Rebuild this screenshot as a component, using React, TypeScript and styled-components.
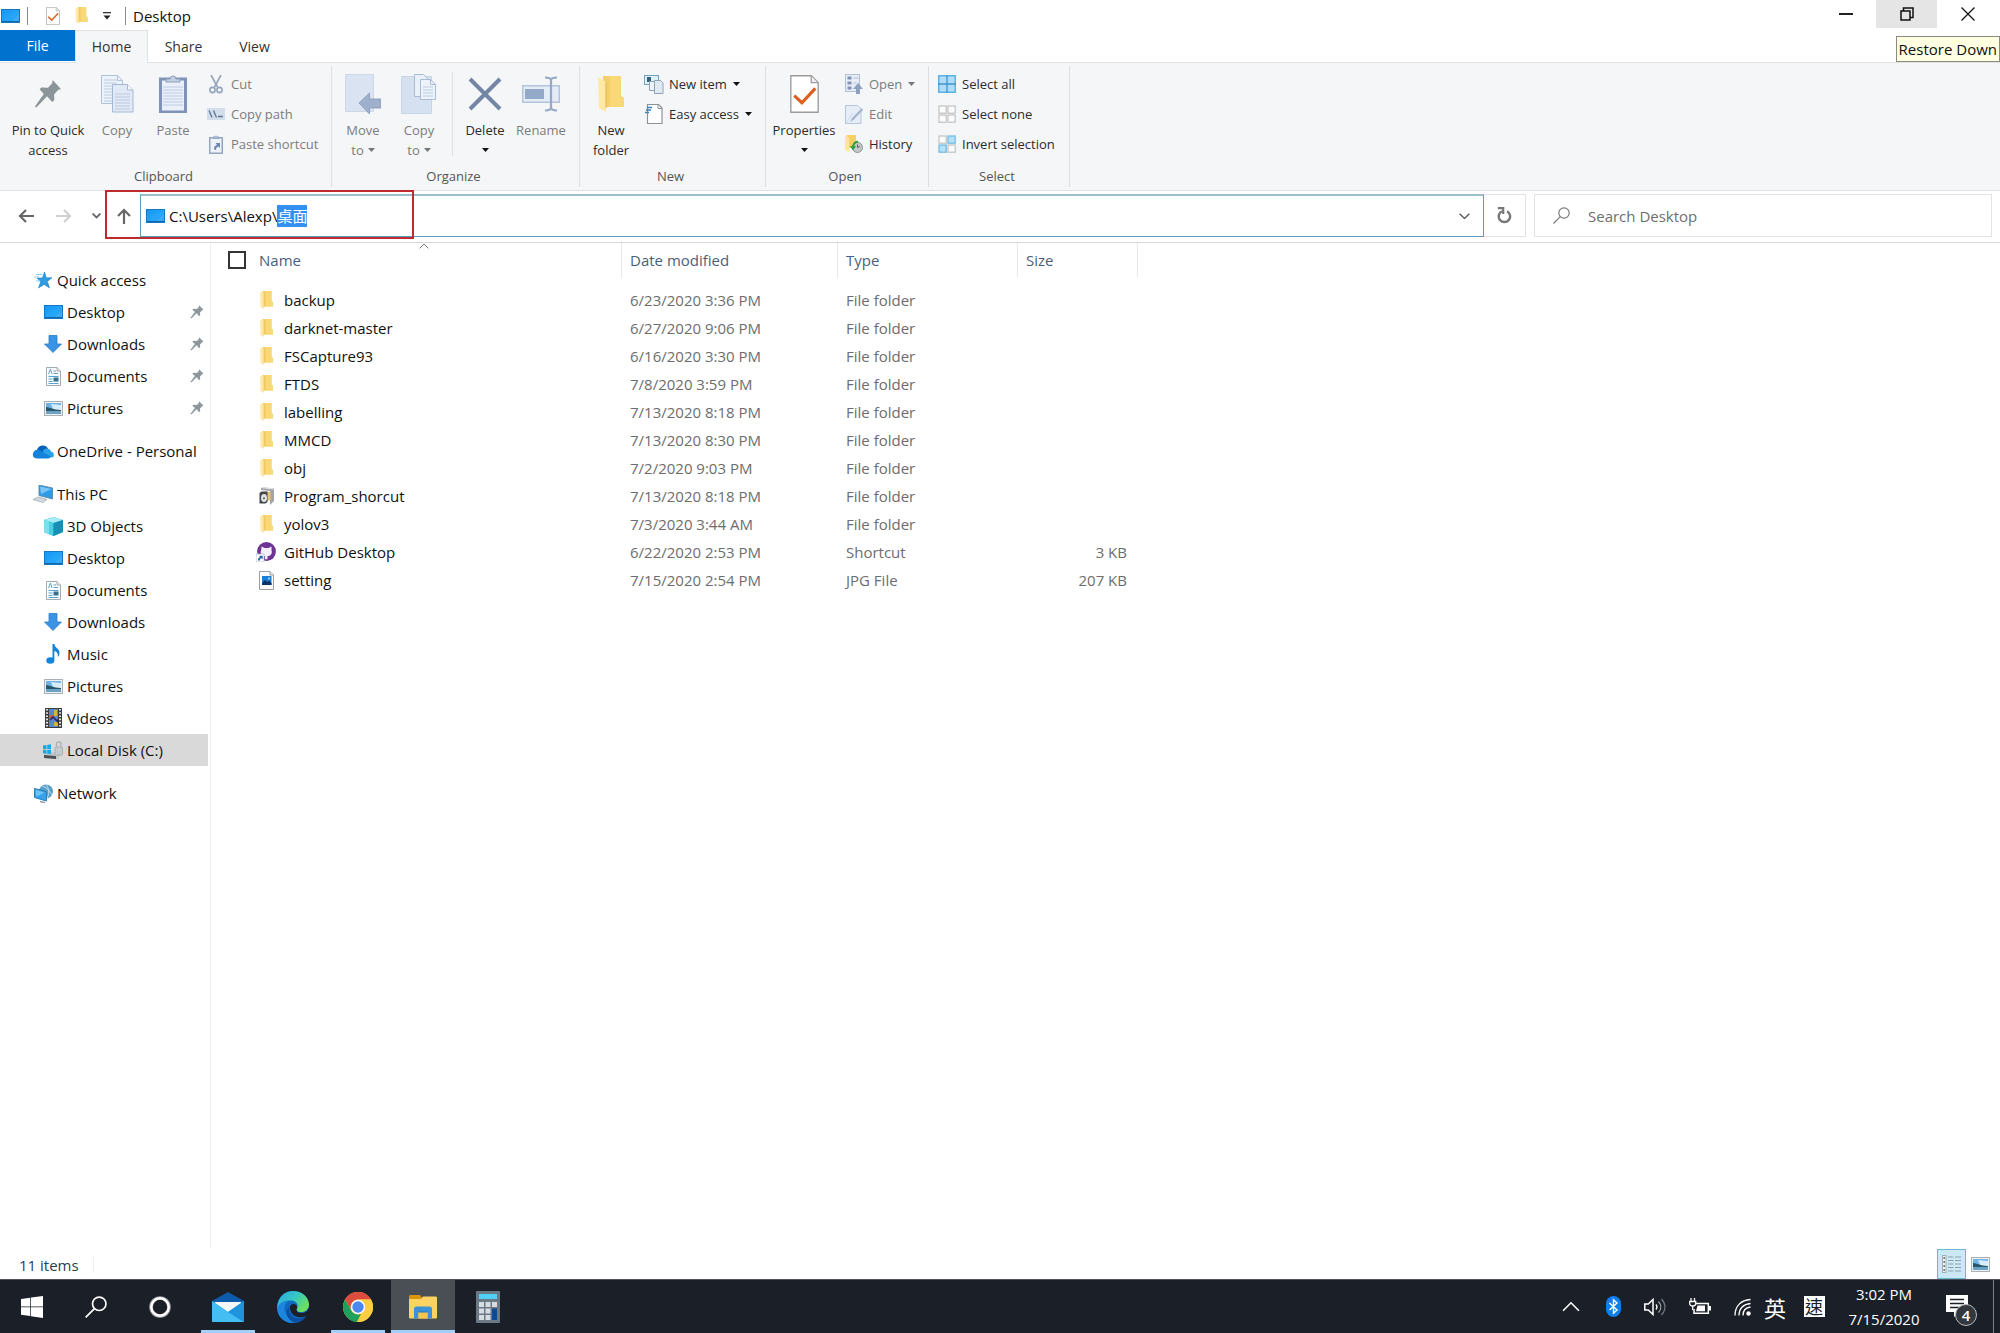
import React, { useEffect, useId, useRef } from "react";
import styled, { createGlobalStyle, css } from "styled-components";

const Global = createGlobalStyle`
  *, *::before, *::after { box-sizing: border-box; }
  body { margin: 0; background: #fff; }
  body, button, input { font-family: "Open Sans", "Noto Sans", "Noto Sans CJK TC", sans-serif; }
  button { border: 0; padding: 0; margin: 0; background: transparent; color: inherit; font-size: inherit; line-height: inherit; cursor: default; }
  svg { display: block; flex: none; }
`;

/* ---------- page ---------- */

const Page = styled.div`
  display: flex;
  flex-direction: column;
  min-height: 100vh;
  background: #fff;
  color: #111;
  font-size: 15px;
  line-height: 22px;
  overflow: hidden;
`;

const TitleBar = styled.header`
  position: relative;
  display: flex;
  align-items: flex-start;
  justify-content: space-between;
  height: 30px;
`;

const QuickTools = styled.div`
  display: flex;
  align-items: center;
  height: 31px;
`;

const ToolButton = styled.button<{ $w: number }>`
  display: flex;
  justify-content: center;
  width: ${(p) => p.$w}px;
`;

const ToolRule = styled.span`
  width: 1px;
  height: 18px;
  background: #8a8a8a;
`;

const WindowTitle = styled.h1`
  margin: 0 0 0 4px;
  font-size: 15px;
  font-weight: 400;
  line-height: 22px;
`;

const WindowButtons = styled.div`
  display: flex;
  padding-right: 2px;
`;

const WindowButton = styled.button<{ $hover?: boolean }>`
  display: flex;
  align-items: center;
  justify-content: center;
  width: 61px;
  height: 28px;
  background: ${(p) => (p.$hover ? "#e5e5e5" : "transparent")};
`;

const Tooltip = styled.div`
  position: absolute;
  top: 36px;
  right: 0;
  z-index: 3;
  padding: 1px 2px 0;
  border: 1px solid #8b8b80;
  background: #ffffe1;
  font-size: 15px;
  line-height: 23px;
  white-space: nowrap;
`;

/* ---------- ribbon ---------- */

const Tabs = styled.div`
  position: relative;
  z-index: 1;
  display: flex;
  height: 32px;
`;

const tab = css`
  height: 31px;
  font-size: 14px;
  text-align: center;
`;

const FileTab = styled.button`
  ${tab}
  width: 75px;
  background: #0173cf;
  color: #fff;
`;

const Tab = styled.button<{ $active?: boolean }>`
  ${tab}
  width: ${(p) => (p.$active ? 73 : 71)}px;
  height: 33px;
  color: #333;
  ${(p) =>
    p.$active &&
    css`
      border: 1px solid #dfe1e3;
      border-bottom: 0;
      background: #f5f6f7;
    `}
`;

const Ribbon = styled.section`
  display: flex;
  height: 129px;
  padding: 3px 0;
  border-top: 1px solid #dfe1e3;
  border-bottom: 1px solid #dfe1e3;
  background: #f5f6f7;
`;

const Group = styled.section<{ $w: number }>`
  display: flex;
  flex-direction: column;
  flex: none;
  width: ${(p) => p.$w}px;
  border-right: 1px solid #dcdee0;
`;

const GroupTools = styled.div<{ $start?: number }>`
  display: flex;
  flex: 1;
  padding-left: ${(p) => p.$start ?? 3}px;
`;

const GroupName = styled.h2`
  margin: 0;
  padding: 0 4px 2px 0;
  color: #555;
  font-size: 13px;
  font-weight: 400;
  line-height: 18px;
  text-align: center;
`;

const BigButton = styled.button<{ $w?: number; $off?: boolean }>`
  display: flex;
  flex-direction: column;
  align-items: center;
  width: ${(p) => p.$w ?? 56}px;
  padding-top: 8px;
  color: ${(p) => (p.$off ? "#7c7c7c" : "#2b2b2b")};
  font-size: 13px;
  line-height: 20px;
  white-space: nowrap;
`;

const BigIcon = styled.span`
  display: flex;
  align-items: center;
  justify-content: center;
  height: 40px;
  margin-bottom: 6px;
`;

const LabelLine = styled.span`
  display: flex;
  align-items: center;
  gap: 4px;
  height: 20px;
`;

const Divider = styled.span`
  width: 1px;
  height: 84px;
  margin: 6px 4px 0 5px;
  background: #dcdee0;
`;

const SmallColumn = styled.div`
  display: flex;
  flex-direction: column;
  padding: 3px 0 0 6px;
`;

const SmallButton = styled.button<{ $off?: boolean }>`
  display: flex;
  align-items: center;
  gap: 6px;
  height: 30px;
  flex: none;
  color: ${(p) => (p.$off ? "#7c7c7c" : "#2b2b2b")};
  font-size: 13px;
  white-space: nowrap;
`;

const IconBox = styled.span<{ $w: number }>`
  display: flex;
  flex: none;
  align-items: center;
  justify-content: center;
  width: ${(p) => p.$w}px;
`;

/* ---------- address row ---------- */

const AddressRow = styled.div`
  position: relative;
  display: flex;
  align-items: flex-start;
  height: 52px;
  padding: 3px 8px 0 8px;
  border-bottom: 1px solid #d5d7d9;
`;

const NavButton = styled.button<{ $w: number }>`
  display: flex;
  align-items: center;
  justify-content: center;
  width: ${(p) => p.$w}px;
  height: 44px;
`;

const AddressBox = styled.div`
  display: flex;
  flex: 1;
  align-items: center;
  gap: 4px;
  height: 43px;
  padding: 0 13px 0 5px;
  border: 1px solid #5f9cba;
  border-top: 2px solid #9dbdd0;
`;

const AddressInput = styled.input`
  flex: 1;
  min-width: 0;
  height: 22px;
  padding: 0;
  border: 0;
  outline: 0;
  background: transparent;
  color: #111;
  font-size: 15px;
  line-height: 22px;
  &::selection { background: #3390f0; color: #fff; }
`;

const RefreshButton = styled.button`
  display: flex;
  align-items: center;
  justify-content: center;
  width: 42px;
  height: 43px;
  border: 1px solid #e3e3e3;
  border-left: 0;
`;

const SearchBox = styled.div`
  display: flex;
  align-items: center;
  gap: 18px;
  flex: 0 1 458px;
  height: 43px;
  margin-left: 8px;
  padding-left: 18px;
  border: 1px solid #e3e3e3;
`;

const SearchInput = styled.input`
  flex: 1;
  min-width: 0;
  height: 24px;
  padding: 0;
  border: 0;
  outline: 0;
  font-size: 15px;
  &::placeholder { color: #6f6f6f; opacity: 1; }
`;

const HighlightFrame = styled.div`
  position: absolute;
  top: -1px;
  left: 105px;
  width: 309px;
  height: 49px;
  border: 2px solid #bf2a30;
  pointer-events: none;
`;

/* ---------- body ---------- */

const Body = styled.div`
  display: flex;
  flex: 1;
`;

const Sidebar = styled.nav`
  display: flex;
  flex: none;
  flex-direction: column;
  gap: 11px;
  width: 211px;
  padding: 21px 2px 0 0;
  border-right: 1px solid #f0f0f0;
`;

const TreeList = styled.ul`
  margin: 0;
  padding: 0;
  list-style: none;
`;

const TreeItem = styled.button<{ $level: number; $selected?: boolean }>`
  display: flex;
  align-items: center;
  gap: 3px;
  width: 100%;
  height: 32px;
  padding: 0 4px 0 ${(p) => (p.$level ? 42 : 32)}px;
  background: ${(p) => (p.$selected ? "#d9d9d9" : "transparent")};
  text-align: left;
  white-space: nowrap;
`;

const TreeName = styled.span`
  flex: 1;
`;

const Files = styled.main`
  flex: 1;
  min-width: 0;
  padding-left: 17px;
`;

const Table = styled.table`
  width: 910px;
  border-collapse: separate;
  border-spacing: 0;
  table-layout: fixed;
`;

const Col = styled.col<{ $w: number }>`
  width: ${(p) => p.$w}px;
`;

const Th = styled.th`
  position: relative;
  height: 34px;
  padding: 0 8px;
  border-right: 1px solid #e8e8e8;
  color: #4c5f7a;
  font-weight: 400;
  text-align: left;
  &:first-child { padding-left: 0; }
`;

const HeadCell = styled.div`
  display: flex;
  align-items: center;
  gap: 13px;
`;

const SortMark = styled.span`
  position: absolute;
  top: 0;
  left: 191px;
`;

const CheckAll = styled.input`
  appearance: none;
  width: 18px;
  height: 18px;
  margin: 0;
  border: 2px solid #333;
  background: #fff;
`;

const Rows = styled.tbody`
  &::before { content: ""; display: table-row; height: 9px; }
`;

const Td = styled.td<{ $right?: boolean }>`
  height: 28px;
  padding: 0 11px 0 8px;
  color: #6d6d6d;
  text-align: ${(p) => (p.$right ? "right" : "left")};
  white-space: nowrap;
`;

const NameTd = styled(Td)`
  padding-left: 28px;
  color: #111;
`;

const FileName = styled.div`
  display: flex;
  align-items: center;
  gap: 8px;
`;

const StatusBar = styled.footer`
  display: flex;
  align-items: flex-end;
  justify-content: space-between;
  height: 31px;
  color: #2a3d5c;
`;

const ItemCount = styled.span`
  margin-bottom: 6px;
  padding: 0 14px 0 19px;
  border-right: 1px solid #efefef;
  line-height: 16px;
`;

const ViewButtons = styled.div`
  display: flex;
  padding-right: 5px;
`;

const ViewButton = styled.button<{ $active?: boolean }>`
  display: flex;
  align-items: center;
  justify-content: center;
  width: 29px;
  height: 30px;
  border: 1px solid ${(p) => (p.$active ? "#69b9d0" : "transparent")};
  background: ${(p) => (p.$active ? "#cbe8f4" : "transparent")};
`;

/* ---------- task bar ---------- */

const TaskBar = styled.footer`
  display: flex;
  justify-content: space-between;
  height: 54px;
  border-top: 1px solid #4d5158;
  background: #1a1f28;
  color: #fff;
`;

const TaskApps = styled.div`
  display: flex;
`;

const Pinned = styled.div`
  display: flex;
  gap: 1px;
  margin-left: 4px;
`;

const TaskButton = styled.button<{ $active?: boolean }>`
  position: relative;
  display: flex;
  align-items: center;
  justify-content: center;
  width: 64px;
  height: 53px;
  background: ${(p) => (p.$active ? "#4a4e55" : "transparent")};
`;

const Running = styled.span<{ $full?: boolean }>`
  position: absolute;
  bottom: 0;
  left: ${(p) => (p.$full ? 0 : 5)}px;
  right: ${(p) => (p.$full ? 0 : 5)}px;
  height: 3px;
  background: #a3cef8;
`;

const Tray = styled.div`
  display: flex;
  align-items: center;
`;

const TrayButton = styled.button<{ $w: number }>`
  display: flex;
  align-items: center;
  justify-content: center;
  width: ${(p) => p.$w}px;
  height: 53px;
`;

const InputLanguage = styled.span`
  font-family: "Noto Sans CJK TC", sans-serif;
  font-size: 22px;
  line-height: 30px;
`;

const InputMode = styled.span`
  width: 21px;
  height: 21px;
  background: #fff;
  color: #1a1f28;
  font-family: "Noto Sans CJK TC", sans-serif;
  font-size: 18px;
  line-height: 20px;
  text-align: center;
`;

const Clock = styled.time`
  display: flex;
  flex-direction: column;
  align-items: center;
  width: 92px;
  margin-right: 3px;
  font-size: 15px;
  line-height: 25px;
`;

const Notices = styled.button`
  position: relative;
  display: flex;
  justify-content: center;
  width: 60px;
  height: 53px;
  padding: 15px 12px 0 0;
`;

const Badge = styled.span`
  position: absolute;
  top: 24px;
  left: 22px;
  width: 22px;
  height: 22px;
  border: 1px solid #b9bbbe;
  border-radius: 50%;
  background: #33373e;
  font-size: 15px;
  font-weight: 600;
  line-height: 20px;
  text-align: center;
`;

const ShowDesktop = styled.button`
  width: 7px;
  height: 53px;
  border-left: 1px solid #7d8085;
`;

/* ---------- icons ---------- */

const DesktopIcon = ({ w = 19, h = 14 }: { w?: number; h?: number }) => {
  const id = useId();
  return (
    <svg width={w} height={h} viewBox="0 0 19 14">
      <defs>
        <linearGradient id={id} x1="0" y1="0" x2="1" y2="1">
          <stop offset="0" stopColor="#1296f3" />
          <stop offset=".6" stopColor="#27a6fb" />
          <stop offset="1" stopColor="#1488e4" />
        </linearGradient>
      </defs>
      <rect x=".5" y=".5" width="18" height="13" fill={`url(#${id})`} stroke="#1478c4" />
      <path d="M18 5L9 13h9z" fill="#56bcff" opacity=".5" />
      <path d="M1 12.5h17" stroke="#0c67ad" strokeWidth="1" />
    </svg>
  );
};

const FolderIcon = ({ w = 13, h = 18 }: { w?: number; h?: number }) => (
  <svg width={w} height={h} viewBox="0 0 26 36">
    <path d="M5 0h18v20l3 2v9H6z" fill="#f5cf6b" />
    <path d="M12 0h11v20l3 2v9H12z" fill="#f9d878" />
    <path d="M0 1l8 5v30L1 32z" fill="#ffe9a6" />
    <path d="M8 6v26" stroke="#e8bb52" strokeWidth="1.2" />
  </svg>
);

const CheckPage = ({ w = 14, h = 18, tick = 3 }: { w?: number; h?: number; tick?: number }) => (
  <svg width={w} height={h} viewBox="0 0 28 37">
    <path d="M.7.7h20l6.600 6.600v29H.7z" fill="#fff" stroke="#9a9a9a" strokeWidth="1.300" />
    <path d="M20.500 1v6.500H27" fill="#eee" stroke="#9a9a9a" strokeWidth="1.200" />
    <path d="M4 20l7.500 7L24.500 13" fill="none" stroke="#dc5f1f" strokeWidth={tick} />
  </svg>
);

const Caret = ({ color = "#111" }: { color?: string }) => (
  <svg width="7" height="4" viewBox="0 0 7 4">
    <path d="M0 0h7L3.500 4z" fill={color} />
  </svg>
);

const BigPin = () => (
  <svg width="28" height="28" viewBox="0 0 28 30">
    <path d="M19 0l9 10-3 .5-4.500 5 .3 6-2.300 2L13 17.500 1.500 29.500 0 28.500 9.500 15 5 10l2-2 7 .4 4.500-5z" fill="#8a9499" />
  </svg>
);

const SmallPin = () => (
  <svg width="14" height="14" viewBox="0 0 28 30">
    <path d="M18 0l10 10-3 1-4.500 5 .3 6-2.300 2L13 17.500 2 29 0 27.500 9.500 15 4 10l2-2 8 .4L18.500 3z" fill="#8e989e" />
  </svg>
);

const Lines = ({ x, y, w, n, step = 3 }: { x: number; y: number; w: number; n: number; step?: number }) => (
  <path
    d={Array.from({ length: n }, (_, i) => `M${x} ${y + i * step}h${w}`).join("")}
    stroke="#bccbe0"
    strokeWidth="1"
  />
);

const CopyIcon = () => (
  <svg width="33" height="38" viewBox="0 0 33 38">
    <path d="M.5.500h16l5 5v23H.5z" fill="#edf3fa" stroke="#b0c2da" />
    <path d="M16.500.500v5h5" fill="none" stroke="#b0c2da" />
    <Lines x={3} y={5} w={13} n={8} />
    <path d="M11.500 9.500h15l5.500 5.500v22H11.500z" fill="#e0e9f5" stroke="#a5b9d5" />
    <path d="M26.500 9.500V15H32" fill="#f5f8fc" stroke="#a5b9d5" />
    <Lines x={14} y={19} w={15} n={6} />
  </svg>
);

const PasteIcon = () => (
  <svg width="28" height="38" viewBox="0 0 28 38">
    <rect x="1.500" y="4" width="25" height="33" fill="#e9f0fa" stroke="#7f93b8" strokeWidth="3" />
    <Lines x={4} y={12} w={20} n={7} />
    <path d="M7 7V4h4a3 3 0 016 0h4v3z" fill="#c4d0e2" stroke="#8d9dba" />
  </svg>
);

const CutIcon = () => (
  <svg width="14" height="19" viewBox="0 0 14 19">
    <path d="M2 0l6.500 12M12 0L5.500 12" stroke="#94a4bd" strokeWidth="1.600" fill="none" />
    <circle cx="3.500" cy="15" r="2.600" fill="none" stroke="#94a4bd" strokeWidth="1.600" />
    <circle cx="10.500" cy="15" r="2.600" fill="none" stroke="#94a4bd" strokeWidth="1.600" />
  </svg>
);

const CopyPathIcon = () => (
  <svg width="18" height="12" viewBox="0 0 18 12">
    <rect width="18" height="12" fill="#d3deec" />
    <path d="M2 2.500l3 7M6.500 2.500l3 7M11 8.500h5" stroke="#62748f" strokeWidth="1.300" />
  </svg>
);

const PasteShortcutIcon = () => (
  <svg width="14" height="19" viewBox="0 0 14 19">
    <rect x=".75" y="2.750" width="12.500" height="15.500" fill="#eef3fa" stroke="#93a5c2" strokeWidth="1.500" />
    <path d="M4 3.500V2h2a1 1 0 012 0h2v1.500z" fill="#b8c5d8" stroke="#93a5c2" />
    <path d="M5 14.500c0-3 1-4 3-4.500L6.500 8H11v5L9.500 11.500C7.500 12 7 13 7 15z" fill="#6f86ae" />
  </svg>
);

const MoveIcon = () => (
  <svg width="36" height="40" viewBox="0 0 36 40">
    <path d="M.5.500h28v37H.5z" fill="#d9e3f1" stroke="#ccd8e9" />
    <path d="M14 29L24.500 19v6H36v9H24.500v6z" fill="#9fb0cc" stroke="#8798b8" strokeWidth=".8" />
  </svg>
);

const CopyToIcon = () => (
  <svg width="36" height="40" viewBox="0 0 36 40">
    <path d="M.5 2.500h30v37H.5z" fill="#d5e0f0" stroke="#c8d5e8" />
    <path d="M13.500.500h9l4 4v18h-13z" fill="#e9f0f8" stroke="#a9bbd5" />
    <path d="M19.500 5.500h10l5 5v15h-15z" fill="#edf3fa" stroke="#a9bbd5" />
    <path d="M29.500 5.500v5h5" fill="none" stroke="#a9bbd5" />
    <Lines x={22} y={13} w={10} n={4} />
  </svg>
);

const DeleteIcon = () => (
  <svg width="34" height="34" viewBox="0 0 34 34">
    <path d="M2 2l30 30M32 2L2 32" stroke="#7386a5" strokeWidth="4" />
  </svg>
);

const RenameIcon = () => (
  <svg width="38" height="36" viewBox="0 0 38 36">
    <rect x=".75" y="9.750" width="36.500" height="16.500" fill="#e3ecf7" stroke="#b3c4dc" strokeWidth="1.500" />
    <rect x="3" y="13" width="19" height="10" fill="#94a8c8" />
    <path d="M23 1.500c4 0 6 1 6 3v27c0 2-2 3-6 3M35 1.500c-4 0-6 1-6 3v27c0 2 2 3 6 3" fill="none" stroke="#94a8c8" strokeWidth="2.200" />
  </svg>
);

const NewItemIcon = () => (
  <svg width="20" height="19" viewBox="0 0 20 19">
    <rect x=".5" y=".5" width="14" height="9" fill="#dff0f8" stroke="#6fa5bf" />
    <path d="M3 2h4v5H3z" fill="#35607a" />
    <path d="M5.500 6.500h6v9h-6z" fill="#eef3f8" stroke="#8fa2b5" />
    <path d="M10.500 5.500h6l2.500 2.500v10.500h-8.500z" fill="#e1e9f3" stroke="#8fa2b5" />
  </svg>
);

const EasyAccessIcon = () => (
  <svg width="18" height="20" viewBox="0 0 18 20">
    <path d="M2.500.500h11l3.500 3.500v15.500H2.500z" fill="#fff" stroke="#8d9499" strokeWidth="1.200" />
    <path d="M13 1v3.500h4" fill="none" stroke="#8d9499" />
    <path d="M2 3.500h5M1 6h5M0 8.500h4" stroke="#3c82b8" strokeWidth="1.700" />
  </svg>
);

const OpenIcon = () => (
  <svg width="18" height="20" viewBox="0 0 18 20">
    <rect x=".5" y=".5" width="14" height="17" fill="#e6edf6" stroke="#b3c0d4" />
    <path d="M2.500 2.500h4v3h-4zM2.500 7.500h4v3h-4zM2.500 12.500h4v3h-4z" fill="#8093b5" />
    <path d="M8.500 4h5M8.500 9h3" stroke="#b3c0d4" />
    <path d="M13 9l5 6h-3v5h-4v-5H8z" fill="#8fa0bf" />
  </svg>
);

const EditIcon = () => (
  <svg width="18" height="19" viewBox="0 0 18 19">
    <path d="M.5.500h12l3.500 3.500v14.500H.5z" fill="#e6edf7" stroke="#b6c6dc" />
    <path d="M17 3L7 13l-2 4 4-2.500L18 5z" fill="#a5b6cf" />
    <path d="M1 18L8 8" stroke="#cddaea" />
  </svg>
);

const HistoryIcon = () => (
  <svg width="18" height="18" viewBox="0 0 18 18">
    <path d="M2 0h9v13H2z" fill="#f6cf66" />
    <path d="M0 0l4 3v14l-4-2z" fill="#ffe69c" />
    <circle cx="12.500" cy="12.500" r="5" fill="#c3c8cb" stroke="#8b9195" />
    <path d="M12.500 9.500v3l2.500 -1" stroke="#5b6166" fill="none" />
    <path d="M8 12c.3-3 2-5 5-5.500" stroke="#2ca13a" strokeWidth="2" fill="none" />
    <path d="M5 11h6L8 15.500z" fill="#2ca13a" />
  </svg>
);

const SelectIcon = ({ fills }: { fills: [boolean, boolean, boolean, boolean] }) => (
  <svg width="18" height="18" viewBox="0 0 18 18">
    {fills.map((on, i) => (
      <rect
        key={i}
        x={(i % 2) * 9 + 1}
        y={Math.floor(i / 2) * 9 + 1}
        width="7.200"
        height="7.200"
        fill={on ? "#b5e0fa" : "#fbfbfb"}
        stroke={on ? "#6fb9e0" : "#c2c2c2"}
        strokeWidth="1.200"
      />
    ))}
  </svg>
);

const SelectAllIcon = () => (
  <svg width="18" height="18" viewBox="0 0 18 18">
    <rect x=".75" y=".75" width="16.500" height="16.500" fill="#aedcfa" stroke="#5fb2e4" strokeWidth="1.500" />
    <path d="M9 0v18M0 9h18" stroke="#3c97d0" strokeWidth="1.300" />
  </svg>
);

const Arrow = ({ dir, color }: { dir: "left" | "right" | "up"; color: string }) => {
  const d = {
    left: "M16 8H2M8 2L2 8l6 6",
    right: "M0 8h14M8 2l6 6-6 6",
    up: "M8 16V2M2 8l6-6 6 6",
  }[dir];
  return (
    <svg width="16" height="16" viewBox="0 0 16 16">
      <path d={d} fill="none" stroke={color} strokeWidth="2.200" />
    </svg>
  );
};

const Chevron = ({ w = 10, color = "#555", sw = 1.5, up = false }: { w?: number; color?: string; sw?: number; up?: boolean }) => (
  <svg width={w} height={w * 0.6} viewBox="0 0 10 6">
    <path d={up ? "M.6 5.400L5 1l4.400 4.400" : "M.6.600L5 5 9.400.600"} fill="none" stroke={color} strokeWidth={sw} />
  </svg>
);

const RefreshIcon = () => (
  <svg width="15" height="17" viewBox="0 0 15 17">
    <path d="M10 4.300A5.700 5.700 0 114.800 4.300" fill="none" stroke="#777" strokeWidth="2.400" />
    <path d="M.8 1.200h5.400v5.800" fill="none" stroke="#777" strokeWidth="2.200" />
  </svg>
);

const Magnifier = ({ s = 17, color = "#7a7a7a", sw = 1.2 }: { s?: number; color?: string; sw?: number }) => (
  <svg width={s} height={s} viewBox="0 0 17 17">
    <circle cx="11" cy="6" r="5.200" fill="none" stroke={color} strokeWidth={sw} />
    <path d="M7.300 9.700L.5 16.500" stroke={color} strokeWidth={sw} />
  </svg>
);

const StarIcon = () => (
  <svg width="18" height="17" viewBox="0 0 18 17">
    <path d="M10.500 0l1.800 5.800H18l-4.700 3.600L15.500 16l-5.300-3.600L4.500 16l2.200-6.200L3 6h5.300z" fill="#2f9ce2" stroke="#1c7fc4" strokeWidth=".6" />
    <path d="M2 2.500h6M0 5h5M2 9h4" stroke="#8ccbf2" strokeWidth="1.200" />
  </svg>
);

const DownloadIcon = () => (
  <svg width="18" height="18" viewBox="0 0 18 18">
    <path d="M5 .5h8V9h4.500L9 17.500.500 9H5z" fill="#3b93e3" stroke="#2b7cc9" strokeWidth=".8" />
  </svg>
);

const DocumentIcon = () => (
  <svg width="15" height="19" viewBox="0 0 15 19">
    <path d="M.5.500h10.500l3.500 3.500v14.500H.5z" fill="#fbfcfd" stroke="#a3abb0" />
    <path d="M11 .5V4h3.500" fill="#e2e6e9" stroke="#a3abb0" />
    <path d="M2.500 7L4.500 2l1.500 5M7.500 4H10M7.500 6.500h4.500M2.500 9.500h10M2.500 12h4M2.500 14.500h4M2.500 16.500h10" stroke="#5ba4cf" fill="none" />
    <rect x="7.500" y="10.500" width="5" height="4" fill="#35718f" />
  </svg>
);

const PictureIcon = () => (
  <svg width="19" height="15" viewBox="0 0 19 15">
    <rect x=".5" y=".5" width="18" height="14" fill="#eef1f4" stroke="#a9b0b7" />
    <path d="M2 2h15v6H2z" fill="#6fb4e8" />
    <path d="M7 3l10 1v4H9z" fill="#d5ecfa" />
    <path d="M2 6c4 0 7 3 15 3v1.500H2z" fill="#27576a" />
    <path d="M2 10h15v3H2z" fill="#6ba3c4" />
  </svg>
);

const CloudIcon = () => (
  <svg width="22" height="15" viewBox="0 0 22 15">
    <path d="M5 6a6 6 0 0111-1.500l-3 6-9 3a4.300 4.300 0 011-7.500z" fill="#0b63b8" />
    <path d="M11 6.500c3-3.500 7-2 8 1 3 .5 3.500 4 2 6L12 12z" fill="#2aa2ea" />
    <path d="M1 12C0 7 5 4 9 7l10 5.500c-.5 1.300-1.500 2-3 2H5c-2 0-3.500-1-4-2.500z" fill="#1583dc" />
  </svg>
);

const PcIcon = () => (
  <svg width="20" height="18" viewBox="0 0 20 18">
    <path d="M6 0l13.500 3v11L6 10.500z" fill="#2f9be6" stroke="#5f8fae" />
    <path d="M7 1.500l11.500 2.500L8 9z" fill="#79c5f7" />
    <path d="M5 12l9 2.500-4 3L0 14.500z" fill="#bcc5cb" stroke="#98a4ac" strokeWidth=".6" />
    <path d="M2.500 14l8 2.500M4 13l8 2.500" stroke="#eef1f3" strokeWidth=".7" />
  </svg>
);

const CubeIcon = () => (
  <svg width="19" height="19" viewBox="0 0 19 19">
    <path d="M9.500 0L19 3v12l-9.500 4L0 15V3z" fill="#25b4cf" />
    <path d="M9.500 0L19 3l-9.500 3L0 3z" fill="#a5ecf5" />
    <path d="M0 3l9.500 3v13L0 15z" fill="#48cfe0" />
    <path d="M0 3l5 1.500v12.300L0 15z" fill="#7fe0ec" />
    <path d="M9.500 6L19 3v12l-9.500 4z" fill="#168fb4" />
  </svg>
);

const MusicIcon = () => (
  <svg width="14" height="20" viewBox="0 0 14 20">
    <ellipse cx="4.300" cy="16.500" rx="4" ry="3.300" fill="#1385d8" />
    <path d="M6.500 0h2c0 4 5 4 5 9 0 2-1 3.500-1.500 4 0-4-1-5-3.700-6v9.500H6.500z" fill="#1385d8" />
  </svg>
);

const VideoIcon = () => (
  <svg width="17" height="20" viewBox="0 0 17 20">
    <rect width="17" height="20" fill="#3b3b40" />
    <rect x="4" y="1" width="9" height="18" fill="#5a86cf" />
    <path d="M4 7h5v3H4z" fill="#c9565a" />
    <path d="M9 2h3v6H9zM9 14h4v4H9z" fill="#d9b23c" />
    <path d="M5 12l3-3 5 5v-3" stroke="#232a44" strokeWidth="1.500" fill="none" />
    <path d="M2 1v18M15 1v18" stroke="#e4e4e4" strokeWidth="2" strokeDasharray="1.600 1.600" />
  </svg>
);

const DiskIcon = () => (
  <svg width="20" height="19" viewBox="0 0 20 19">
    <path d="M1 13l5-2h13l-4 7-14-1z" fill="#c3c7c9" />
    <path d="M1 14l12 1v3L1 17z" fill="#4b5154" />
    <path d="M0 4.500L3.500 4v4H0zM4.200 3.900L8 3.300V8H4.200zM0 8.700h3.500v4L0 12.200zM4.200 8.700H8v4.600l-3.800-.5z" fill="#18a9e2" />
    <rect x="12" y="6" width="7.500" height="8" rx="1" fill="#c5cacd" stroke="#9aa0a4" strokeWidth=".7" />
    <path d="M13.500 6V3a2.200 2.200 0 014.400 0v3" fill="none" stroke="#a9afb3" strokeWidth="1.300" />
  </svg>
);

const NetworkIcon = () => (
  <svg width="19" height="19" viewBox="0 0 19 19">
    <circle cx="12" cy="7.500" r="7" fill="#5a9fc6" />
    <path d="M8 2c4 1 8 5 10 9M12 .5c4 5 3 10 1 14" stroke="#bfe0ef" fill="none" />
    <path d="M.5 4.500l12 3v9.500L.500 13.500z" fill="#38a1ea" stroke="#2a7fb9" />
    <path d="M1.500 6l9 2.500-8 4z" fill="#72c4f8" />
    <path d="M6 17.500l5 1.200" stroke="#8e9ba3" strokeWidth="1.300" />
  </svg>
);

const ProgramIcon = () => (
  <svg width="15" height="18" viewBox="0 0 15 18">
    <path d="M2 0l13 1.500v12.500l-4 4V4L2 3z" fill="#a3a6a8" />
    <path d="M2 .5l12.500 1.500" stroke="#e6e8e9" strokeWidth="1.200" />
    <path d="M6 4.500l5.500 .5v8l-5.500 2z" fill="#e9c078" />
    <path d="M.5 6l2-1.500h6V15l-2 1.500h-6z" fill="#43484d" />
    <ellipse cx="5" cy="11" rx="3" ry="4" fill="#dfe4e7" />
    <circle cx="5" cy="11.200" r="1" fill="#565d63" />
  </svg>
);

const GitHubIcon = () => (
  <svg width="20" height="20" viewBox="0 0 20 20">
    <circle cx="10.500" cy="9.500" r="9.400" fill="#6e3494" />
    <path d="M5.500 4.500l3 1.500h4l3-1.500v3.700c1 3-.5 5.800-4 6v3H9v-3c-3.500-.2-5.200-3-3.800-6z" fill="#f3eef7" />
    <rect y="12" width="8" height="8" fill="#fff" stroke="#a8b5c2" strokeWidth=".7" />
    <path d="M2 18.500c0-2.500.8-3 2-3.300L3 13.700h3.700v3.600l-1.200-1C4.300 16.500 4 17 4 18.500z" fill="#2867a8" />
  </svg>
);

const ImageFileIcon = () => (
  <svg width="15" height="19" viewBox="0 0 15 19">
    <path d="M.5.500h10.500l3.500 3.500v14.500H.5z" fill="#fdfdfd" stroke="#9aa0a5" />
    <path d="M11 .5V4h3.500" fill="#e6e8ea" stroke="#9aa0a5" />
    <rect x="3" y="5" width="9.500" height="9" fill="#1e7fd6" />
    <path d="M3 12l3-3 2.500 2 1.500-1.200 2.500 2.200v2H3z" fill="#0b3460" />
    <circle cx="10" cy="7.500" r="1" fill="#bfe0ff" />
  </svg>
);

const DetailsIcon = () => (
  <svg width="19" height="18" viewBox="0 0 19 18">
    <rect x=".5" y=".5" width="3.500" height="17" fill="#eef4f7" stroke="#a3adb2" />
    <path d="M2.200 2v14" stroke="#6c7a82" strokeWidth="1.500" strokeDasharray="2 2" />
    <path d="M6 2h5.500M6 5.500h5.500M6 9h5.500M6 12.500h5.500M6 16h5.500M13 2h6M13 5.500h6M13 9h6M13 12.500h6M13 16h6" stroke="#8fa1aa" />
  </svg>
);

const StartIcon = () => (
  <svg width="22" height="22" viewBox="0 0 22 22">
    <path d="M0 3l9.300-1.300v8.800H0zM10 1.600L22 0v10.500H10zM0 11.300h9.300v8.800L0 18.800zM10 11.300h12V22l-12-1.700z" fill="#fff" />
  </svg>
);

const CortanaIcon = () => (
  <svg width="22" height="22" viewBox="0 0 22 22">
    <circle cx="11" cy="11" r="9" fill="none" stroke="#9a9da2" strokeWidth="3.600" />
    <circle cx="11" cy="11" r="8.700" fill="none" stroke="#fff" strokeWidth="2.400" />
  </svg>
);

const MailIcon = () => (
  <svg width="32" height="30" viewBox="0 0 32 30">
    <path d="M0 9L16 0l16 9v4H0z" fill="#0d5cab" />
    <path d="M3 10h26v10H3z" fill="#f4f6f8" />
    <path d="M0 9l16 11L32 9v21H0z" fill="#2ba7e8" />
    <path d="M0 9l16 11 16 10H0z" fill="#43bdf2" />
    <path d="M16 20L32 9v21z" fill="#1f93dc" />
  </svg>
);

const EdgeIcon = () => {
  const id = useId();
  return (
    <svg width="32" height="32" viewBox="0 0 32 32">
      <defs>
        <linearGradient id={id} x1="0" y1="0" x2="1" y2=".6">
          <stop offset="0" stopColor="#2aa5e6" />
          <stop offset=".55" stopColor="#36c9c1" />
          <stop offset="1" stopColor="#6de05a" />
        </linearGradient>
      </defs>
      <circle cx="16" cy="16" r="16" fill="#1068c2" />
      <path d="M1 12C3 4 9 0 16 0c9 0 16 6 16 13.500 0 5-4 7.500-7.500 7.500-4 0-5.500-1.500-4.500-3.500 2-4-1-8-6.500-8C7 9.500 1 13 .5 19c-.6-2-.3-5 .5-7z" fill={`url(#${id})`} />
      <path d="M.3 18C1 12 7 9.500 12 9.500c-5 3-6 9-2.500 14 3 4.500 7 6.500 11 7.500-9 3.500-20-3-20.200-13z" fill="#1a87dc" />
      <path d="M12.500 16c-2 6 3 12 10 11.500 3-.2 5-1.300 6.500-2.500-2.500 4.500-5.500 6-9 7C11 31.500 6 20 12.500 16z" fill="#0c4f9f" />
      <path d="M13 15.500c.8-3 5.500-3.500 7 0 .4 1.500-.5 2-.5 3.500 0 2 3 3.500 6 3 3-.6 5-2 6.500-5 .3 3-.3 5.500-2 7.500-4 2.500-12 2.500-15-2-1.500-2-2.300-4.500-2-7z" fill="#1a1f28" />
    </svg>
  );
};

const ChromeIcon = () => (
  <svg width="30" height="30" viewBox="0 0 30 30">
    <circle cx="15" cy="15" r="15" fill="#fbcd42" />
    <path d="M2 7.500A15 15 0 0128 7.500H15a7.500 7.500 0 00-6.500 11z" fill="#dc4b3e" />
    <path d="M2 7.500l6.500 11.200A7.500 7.500 0 0015 22.500l3-.5-4 8A15 15 0 012 7.500z" fill="#1fa15d" />
    <path d="M15 7.500h13A15 15 0 0114 30l7.500-11.500a7.500 7.500 0 00-6.500-11z" fill="#fbcd42" />
    <circle cx="15" cy="15" r="7.200" fill="#fff" />
    <circle cx="15" cy="15" r="5.700" fill="#4a87ee" />
  </svg>
);

const ExplorerIcon = () => (
  <svg width="28" height="24" viewBox="0 0 28 24">
    <path d="M0 1.500C0 .5.500 0 1.500 0H11l2 3v1.500H0z" fill="#d8940c" />
    <path d="M0 4h12l2-2.500h12.500c1 0 1.500.5 1.500 1.500v19c0 1-.5 1.500-1.500 1.500h-25C.5 23.500 0 23 0 22z" fill="#fbd363" />
    <path d="M5 23.500V14c0-1.500.8-2.500 2.500-2.500h13c1.700 0 2.500 1 2.500 2.500v9.500h-4.500V17H9.500v6.500z" fill="#3a93d8" />
    <path d="M9.500 17h9v6.500h-9z" fill="#f8c64a" />
    <path d="M9.500 17h9" stroke="#2473b6" />
  </svg>
);

const CalculatorIcon = () => (
  <svg width="24" height="32" viewBox="0 0 24 32">
    <rect width="24" height="32" rx="1" fill="#6c7985" />
    <rect x="3" y="3" width="18" height="5" fill="#4fd0f4" />
    <path d="M3 11h5v5H3zM9.500 11h5v5h-5zM16 11h5v5h-5zM3 17.500h5v5H3zM9.500 17.500h5v5h-5zM3 24h5v5H3zM9.500 24h5v5h-5z" fill="#d5dce2" />
    <path d="M16 17.500h5V29h-5z" fill="#0e4a8f" />
  </svg>
);

const BluetoothIcon = () => (
  <svg width="15" height="21" viewBox="0 0 15 21">
    <rect width="15" height="21" rx="7.500" fill="#0f7fe8" />
    <path d="M3.500 7l7.500 7-3.500 3.200V3.800L11 7l-7.500 7" fill="none" stroke="#fff" strokeWidth="1.400" />
  </svg>
);

const SpeakerIcon = () => (
  <svg width="22" height="20" viewBox="0 0 22 20">
    <path d="M.8 7h3.500L9 2.500v15L4.300 13H.800z" fill="none" stroke="#fff" strokeWidth="1.500" />
    <path d="M12 7.500c1.200 1.500 1.200 3.500 0 5" fill="none" stroke="#fff" strokeWidth="1.300" />
    <path d="M14.500 4.500c3 3.300 3 7.700 0 11" fill="none" stroke="#9fa2a6" strokeWidth="1.300" />
    <path d="M17.500 2c4.500 5 4.500 11 0 16" fill="none" stroke="#777b80" strokeWidth="1.300" />
  </svg>
);

const BatteryIcon = () => (
  <svg width="22" height="18" viewBox="0 0 22 18">
    <path d="M7 5.500h12.300v9.700H5V11" fill="none" stroke="#fff" strokeWidth="1.500" />
    <path d="M20 8h2v4.500h-2z" fill="#fff" />
    <path d="M8.500 7.500H16v5.700H7z" fill="#fff" />
    <path d="M2 0v3M5.500 0v3M.7 3.500h6v2c0 1.500-1 2.500-3 2.500s-3-1-3-2.500zM3.700 8v4" fill="none" stroke="#fff" strokeWidth="1.300" />
  </svg>
);

const WifiIcon = () => (
  <svg width="17" height="18" viewBox="0 0 17 18">
    <path d="M1 17.500C1 8 7 2 16.500 1.500M5 17.500C5 10.500 9.500 6 16.500 5.500M9 17.500c0-5 3-8 7.500-8.500" fill="none" stroke="#fff" strokeWidth="1.300" />
    <circle cx="14.500" cy="15.500" r="2.200" fill="#fff" />
  </svg>
);

const NoticeIcon = () => (
  <svg width="22" height="22" viewBox="0 0 22 22">
    <path d="M0 0h22v17h-8l-6 5v-5H0z" fill="#fff" />
    <path d="M4 4.500h14M4 8.500h14M4 12.500h9" stroke="#1a1f28" strokeWidth="1.600" />
  </svg>
);

/* ---------- content ---------- */

type Entry = { name: string; icon: React.ReactNode; pinned?: boolean; selected?: boolean };

const tree: { root: Entry; items: Entry[] }[] = [
  {
    root: { name: "Quick access", icon: <StarIcon /> },
    items: [
      { name: "Desktop", icon: <DesktopIcon />, pinned: true },
      { name: "Downloads", icon: <DownloadIcon />, pinned: true },
      { name: "Documents", icon: <DocumentIcon />, pinned: true },
      { name: "Pictures", icon: <PictureIcon />, pinned: true },
    ],
  },
  { root: { name: "OneDrive - Personal", icon: <CloudIcon /> }, items: [] },
  {
    root: { name: "This PC", icon: <PcIcon /> },
    items: [
      { name: "3D Objects", icon: <CubeIcon /> },
      { name: "Desktop", icon: <DesktopIcon /> },
      { name: "Documents", icon: <DocumentIcon /> },
      { name: "Downloads", icon: <DownloadIcon /> },
      { name: "Music", icon: <MusicIcon /> },
      { name: "Pictures", icon: <PictureIcon /> },
      { name: "Videos", icon: <VideoIcon /> },
      { name: "Local Disk (C:)", icon: <DiskIcon />, selected: true },
    ],
  },
  { root: { name: "Network", icon: <NetworkIcon /> }, items: [] },
];

type FileRow = { name: string; date: string; type?: string; size?: string; icon?: React.ReactNode };

const files: FileRow[] = [
  { name: "backup", date: "6/23/2020 3:36 PM" },
  { name: "darknet-master", date: "6/27/2020 9:06 PM" },
  { name: "FSCapture93", date: "6/16/2020 3:30 PM" },
  { name: "FTDS", date: "7/8/2020 3:59 PM" },
  { name: "labelling", date: "7/13/2020 8:18 PM" },
  { name: "MMCD", date: "7/13/2020 8:30 PM" },
  { name: "obj", date: "7/2/2020 9:03 PM" },
  { name: "Program_shorcut", date: "7/13/2020 8:18 PM", icon: <ProgramIcon /> },
  { name: "yolov3", date: "7/3/2020 3:44 AM" },
  { name: "GitHub Desktop", date: "6/22/2020 2:53 PM", type: "Shortcut", size: "3 KB", icon: <GitHubIcon /> },
  { name: "setting", date: "7/15/2020 2:54 PM", type: "JPG File", size: "207 KB", icon: <ImageFileIcon /> },
];

type BigProps = { icon: React.ReactNode; top: string; bottom?: string; menu?: boolean; off?: boolean; width?: number };

const Big = ({ icon, top, bottom, menu, off, width }: BigProps) => (
  <BigButton $off={off} $w={width} disabled={off}>
    <BigIcon>{icon}</BigIcon>
    <LabelLine>{top}</LabelLine>
    {(bottom || menu) && (
      <LabelLine>
        {bottom}
        {menu && <Caret color={off ? "#777" : "#111"} />}
      </LabelLine>
    )}
  </BigButton>
);

type SmallProps = { icon: React.ReactNode; label: string; menu?: boolean; off?: boolean };

const Small = ({ icon, label, menu, off }: SmallProps) => (
  <SmallButton $off={off} disabled={off}>
    <IconBox $w={18}>{icon}</IconBox>
    {label}
    {menu && <Caret color={off ? "#777" : "#111"} />}
  </SmallButton>
);

const TreeEntry = ({ entry, level }: { entry: Entry; level: number }) => (
  <li>
    <TreeItem $level={level} $selected={entry.selected}>
      <IconBox $w={22}>{entry.icon}</IconBox>
      <TreeName>{entry.name}</TreeName>
      {entry.pinned && <SmallPin />}
    </TreeItem>
  </li>
);

export default function App() {
  const address = useRef<HTMLInputElement>(null);

  useEffect(() => {
    const box = address.current;
    if (!box) return;
    box.focus();
    box.setSelectionRange(box.value.lastIndexOf("\\") + 1, box.value.length);
  }, []);

  return (
    <Page>
      <Global />
      <TitleBar>
        <QuickTools>
          <IconBox $w={21}><DesktopIcon /></IconBox>
          <IconBox $w={13}><ToolRule /></IconBox>
          <ToolButton $w={38} aria-label="Properties"><CheckPage /></ToolButton>
          <ToolButton $w={19} aria-label="New folder"><FolderIcon w={13} h={17} /></ToolButton>
          <ToolButton $w={31} aria-label="Customize Quick Access Toolbar">
            <svg width="8" height="8" viewBox="0 0 8 8">
              <path d="M0 .7h8" stroke="#222" strokeWidth="1.200" />
              <path d="M.5 3.500h7L4 7.500z" fill="#222" />
            </svg>
          </ToolButton>
          <IconBox $w={7}><ToolRule /></IconBox>
          <WindowTitle>Desktop</WindowTitle>
        </QuickTools>
        <WindowButtons>
          <WindowButton aria-label="Minimize">
            <svg width="14" height="2" viewBox="0 0 14 2"><path d="M0 1h14" stroke="#222" strokeWidth="2" /></svg>
          </WindowButton>
          <WindowButton $hover aria-label="Restore Down" aria-describedby="restore-tip">
            <svg width="14" height="14" viewBox="0 0 14 14">
              <path d="M1 4h9v9H1zM3.500 4V1H13v9.500h-3" fill="none" stroke="#111" strokeWidth="1.500" />
            </svg>
          </WindowButton>
          <WindowButton aria-label="Close">
            <svg width="14" height="14" viewBox="0 0 14 14">
              <path d="M.5.500l13 13M13.500.500l-13 13" stroke="#111" strokeWidth="1.300" />
            </svg>
          </WindowButton>
        </WindowButtons>
        <Tooltip role="tooltip" id="restore-tip">Restore Down</Tooltip>
      </TitleBar>

      <Tabs>
        <FileTab>File</FileTab>
        <Tab $active>Home</Tab>
        <Tab>Share</Tab>
        <Tab>View</Tab>
      </Tabs>

      <Ribbon>
        <Group $w={332}>
          <GroupTools $start={7}>
            <Big icon={<BigPin />} top="Pin to Quick" bottom="access" width={82} />
            <Big icon={<CopyIcon />} top="Copy" off />
            <Big icon={<PasteIcon />} top="Paste" off />
            <SmallColumn>
              <Small icon={<CutIcon />} label="Cut" off />
              <Small icon={<CopyPathIcon />} label="Copy path" off />
              <Small icon={<PasteShortcutIcon />} label="Paste shortcut" off />
            </SmallColumn>
          </GroupTools>
          <GroupName>Clipboard</GroupName>
        </Group>
        <Group $w={248}>
          <GroupTools>
            <Big icon={<MoveIcon />} top="Move" bottom="to" menu off />
            <Big icon={<CopyToIcon />} top="Copy" bottom="to" menu off />
            <Divider />
            <Big icon={<DeleteIcon />} top="Delete" menu />
            <Big icon={<RenameIcon />} top="Rename" off />
          </GroupTools>
          <GroupName>Organize</GroupName>
        </Group>
        <Group $w={186}>
          <GroupTools>
            <Big icon={<FolderIcon w={26} h={36} />} top="New" bottom="folder" />
            <SmallColumn>
              <Small icon={<NewItemIcon />} label="New item" menu />
              <Small icon={<EasyAccessIcon />} label="Easy access" menu />
            </SmallColumn>
          </GroupTools>
          <GroupName>New</GroupName>
        </Group>
        <Group $w={163}>
          <GroupTools>
            <Big icon={<CheckPage w={29} h={38} />} top="Properties" menu width={70} />
            <SmallColumn>
              <Small icon={<OpenIcon />} label="Open" menu off />
              <Small icon={<EditIcon />} label="Edit" off />
              <Small icon={<HistoryIcon />} label="History" />
            </SmallColumn>
          </GroupTools>
          <GroupName>Open</GroupName>
        </Group>
        <Group $w={141}>
          <GroupTools>
            <SmallColumn>
              <Small icon={<SelectAllIcon />} label="Select all" />
              <Small icon={<SelectIcon fills={[false, false, false, false]} />} label="Select none" />
              <Small icon={<SelectIcon fills={[false, true, true, false]} />} label="Invert selection" />
            </SmallColumn>
          </GroupTools>
          <GroupName>Select</GroupName>
        </Group>
      </Ribbon>

      <AddressRow>
        <NavButton $w={36} aria-label="Back"><Arrow dir="left" color="#666" /></NavButton>
        <NavButton $w={40} aria-label="Forward" disabled><Arrow dir="right" color="#d0d0d0" /></NavButton>
        <NavButton $w={24} aria-label="Recent locations"><Chevron w={9} color="#666" sw={2} /></NavButton>
        <NavButton $w={32} aria-label="Up"><Arrow dir="up" color="#666" /></NavButton>
        <AddressBox>
          <DesktopIcon />
          <AddressInput ref={address} aria-label="Address" defaultValue={"C:\\Users\\Alexp\\桌面"} spellCheck={false} />
          <button aria-label="Previous locations"><Chevron w={11} color="#555" sw={1.2} /></button>
        </AddressBox>
        <RefreshButton aria-label="Refresh"><RefreshIcon /></RefreshButton>
        <SearchBox>
          <Magnifier />
          <SearchInput type="text" aria-label="Search Desktop" placeholder="Search Desktop" />
        </SearchBox>
        <HighlightFrame />
      </AddressRow>

      <Body>
        <Sidebar aria-label="Folders">
          {tree.map(({ root, items }) => (
            <TreeList key={root.name}>
              <TreeEntry entry={root} level={0} />
              {items.map((item) => (
                <TreeEntry key={item.name} entry={item} level={1} />
              ))}
            </TreeList>
          ))}
        </Sidebar>
        <Files>
          <Table>
            <colgroup>
              <Col $w={394} />
              <Col $w={216} />
              <Col $w={180} />
              <Col $w={120} />
            </colgroup>
            <thead>
              <tr>
                <Th scope="col">
                  <HeadCell>
                    <CheckAll type="checkbox" aria-label="Select all items" />
                    Name
                  </HeadCell>
                  <SortMark><Chevron w={10} up sw={1} color="#777" /></SortMark>
                </Th>
                <Th scope="col">Date modified</Th>
                <Th scope="col">Type</Th>
                <Th scope="col">Size</Th>
              </tr>
            </thead>
            <Rows>
              {files.map((f) => (
                <tr key={f.name}>
                  <NameTd>
                    <FileName>
                      <IconBox $w={20}>{f.icon ?? <FolderIcon />}</IconBox>
                      {f.name}
                    </FileName>
                  </NameTd>
                  <Td>{f.date}</Td>
                  <Td>{f.type ?? "File folder"}</Td>
                  <Td $right>{f.size}</Td>
                </tr>
              ))}
            </Rows>
          </Table>
        </Files>
      </Body>

      <StatusBar>
        <ItemCount>11 items</ItemCount>
        <ViewButtons>
          <ViewButton $active aria-label="Details view"><DetailsIcon /></ViewButton>
          <ViewButton aria-label="Large icons view"><PictureIcon /></ViewButton>
        </ViewButtons>
      </StatusBar>

      <TaskBar>
        <TaskApps>
          <TaskButton aria-label="Start"><StartIcon /></TaskButton>
          <TaskButton aria-label="Search"><Magnifier s={22} color="#fff" sw={1.3} /></TaskButton>
          <TaskButton aria-label="Cortana"><CortanaIcon /></TaskButton>
          <Pinned>
            <TaskButton aria-label="Mail"><MailIcon /><Running /></TaskButton>
            <TaskButton aria-label="Edge"><EdgeIcon /></TaskButton>
            <TaskButton aria-label="Chrome"><ChromeIcon /><Running /></TaskButton>
            <TaskButton $active aria-label="File Explorer"><ExplorerIcon /><Running $full /></TaskButton>
            <TaskButton aria-label="Calculator"><CalculatorIcon /></TaskButton>
          </Pinned>
        </TaskApps>
        <Tray>
          <TrayButton $w={42} aria-label="Show hidden icons"><Chevron w={18} up color="#fff" sw={0.9} /></TrayButton>
          <TrayButton $w={42} aria-label="Bluetooth"><BluetoothIcon /></TrayButton>
          <TrayButton $w={42} aria-label="Volume"><SpeakerIcon /></TrayButton>
          <TrayButton $w={48} aria-label="Battery"><BatteryIcon /></TrayButton>
          <TrayButton $w={36} aria-label="Network"><WifiIcon /></TrayButton>
          <TrayButton $w={30}><InputLanguage>英</InputLanguage></TrayButton>
          <TrayButton $w={48}><InputMode>速</InputMode></TrayButton>
          <Clock>
            <span>3:02 PM</span>
            <span>7/15/2020</span>
          </Clock>
          <Notices aria-label="Notifications">
            <NoticeIcon />
            <Badge>4</Badge>
          </Notices>
          <ShowDesktop aria-label="Show desktop" />
        </Tray>
      </TaskBar>
    </Page>
  );
}
